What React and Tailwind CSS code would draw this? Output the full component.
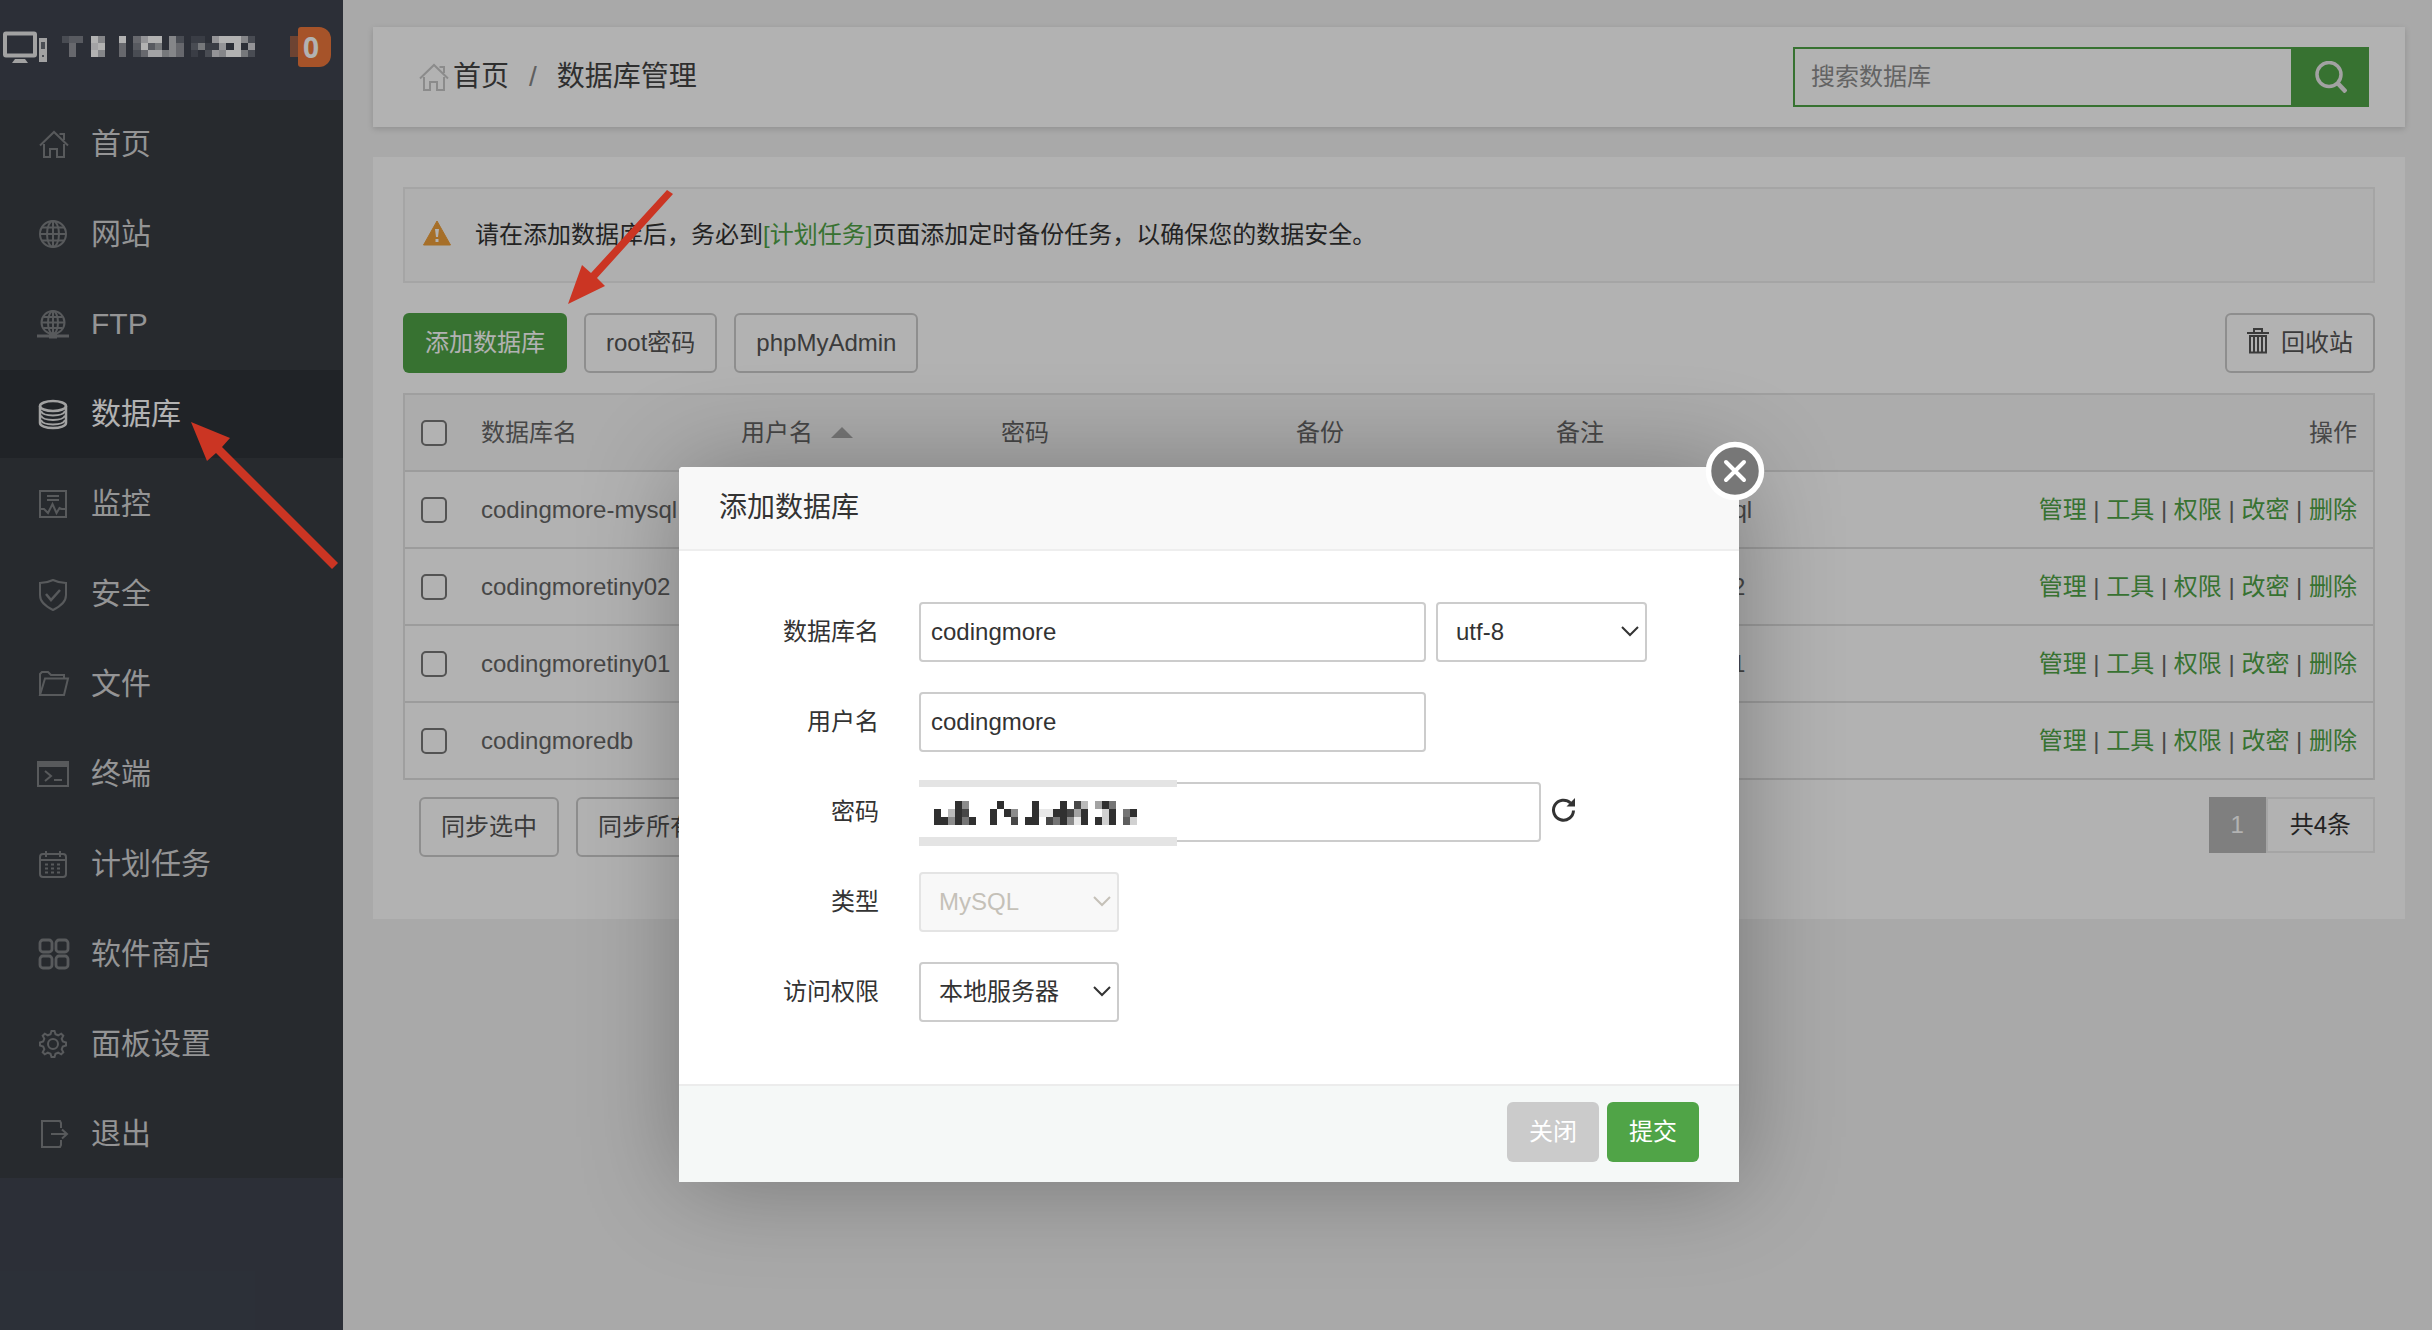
import React, { useState } from "react";

const menuItems = [
  { id: "home", label: "首页" },
  { id: "site", label: "网站" },
  { id: "ftp", label: "FTP" },
  { id: "database", label: "数据库" },
  { id: "monitor", label: "监控" },
  { id: "security", label: "安全" },
  { id: "files", label: "文件" },
  { id: "terminal", label: "终端" },
  { id: "cron", label: "计划任务" },
  { id: "store", label: "软件商店" },
  { id: "settings", label: "面板设置" },
  { id: "logout", label: "退出" },
];

const databases = ["codingmore-mysql", "codingmoretiny02", "codingmoretiny01", "codingmoredb"];
const rowActions = ["管理", "工具", "权限", "改密", "删除"];

// opacity of each masked cell, 0 - 9
const titleMask = [
  "233096009047990620110799962",
  "040089004039350640251170907",
  "040096004024885640102769952",
];
const passwordMask = [
  "00095000090000900090830496000",
  "90398000909500911998490029069",
  "99596900900809908695190929072",
];

const icons = {
  home: (
    <>
      <path d="M1 15.500 15 2l14 13.500" />
      <path d="M5 14v13h6v-8h7v8h7V14" />
      <path d="M20.500 4H25v6" />
    </>
  ),
  site: (
    <>
      <circle cx="14" cy="14" r="13" />
      <ellipse cx="14" cy="14" rx="6" ry="13" />
      <path d="M14 1v26M1 14h26M3 7.500h22M3 20.500h22" />
    </>
  ),
  ftp: (
    <>
      <circle cx="14" cy="12.500" r="11.500" />
      <ellipse cx="14" cy="12.500" rx="5" ry="11.500" />
      <path d="M14 1v23M3 12.500h22M4.500 7h19M4.500 18h19" />
      <path d="M-2 26h32" strokeWidth="3" />
      <path d="M10 26h8" strokeWidth="5" />
    </>
  ),
  database: (
    <g strokeWidth="2.500">
      <ellipse cx="14" cy="6" rx="13" ry="5" />
      <path d="M1 6v17c0 2.800 5.800 5 13 5s13-2.200 13-5V6" />
      <path d="M2 11c1 2.800 5.800 4.500 12 4.500s11-1.700 12-4.500M2 15.500c1 2.800 5.800 4.500 12 4.500s11-1.700 12-4.500M2 20c1 2.800 5.800 4.500 12 4.500s11-1.700 12-4.500" strokeWidth="2" />
    </g>
  ),
  monitor: (
    <>
      <path d="M1 1h26v26H1zM8 6h12M8 10h12" />
      <path d="M1 19h4l4 4 4.500-9 4 9 3-5 2 1H27" />
    </>
  ),
  security: (
    <>
      <path d="M14 0c4 2 8 3 13 3v12c0 7-5 11-13 15C6 26 1 22 1 15V3c5 0 9-1 13-3z" />
      <path d="m7 14 5 6L21 10" strokeWidth="2.500" />
    </>
  ),
  files: (
    <>
      <path d="M1 25V4l2-2h6l3 3h13v3" />
      <path d="M1 25 6 8.500h23L25 25H1z" />
    </>
  ),
  terminal: (
    <>
      <path d="M-1 2h30v24H-1z" />
      <path d="M0 4.500h28" strokeWidth="5" />
      <path d="m6 11 6 5-6 5M15 20h8" />
    </>
  ),
  cron: (
    <>
      <rect x="1" y="4" width="26" height="23" rx="3" />
      <path d="M1 10h26M7 1v6M21 1v6" />
      <path d="M6 14.500h17M6 18.500h17M6 22.500h17" strokeDasharray="3 3" />
    </>
  ),
  store: (
    <g strokeWidth="2.800">
      <rect x="1" y="0" width="12" height="12" rx="3" />
      <rect x="17" y="0" width="12" height="12" rx="3" />
      <rect x="1" y="16" width="12" height="12" rx="3" />
      <rect x="17" y="16" width="12" height="12" rx="3" />
    </g>
  ),
  settings: (
    <>
      <path d="M11.500 4.200 12.500 1h3l1 3.200 2.700 1.100 3-1.600 2.100 2.100-1.600 3 1.100 2.700 3.200 1v3l-3.200 1-1.100 2.700 1.600 3-2.100 2.100-3-1.600-2.700 1.100-1 3.200h-3l-1-3.200-2.700-1.100-3 1.600-2.100-2.100 1.600-3-1.100-2.700-3.200-1v-3l3.200-1 1.100-2.700-1.600-3 2.100-2.100 3 1.600z" />
      <circle cx="14" cy="14" r="5" />
    </>
  ),
  logout: (
    <>
      <path d="M22 8V3l-1-2H3v26h18l1-2v-5" />
      <path d="M12 14h15M23 9.500l5 4.500-5 4.500" />
    </>
  ),
};

function Icon({ name, className }) {
  return (
    <svg
      viewBox="0 0 28 28"
      className={`h-7 w-7 shrink-0 overflow-visible ${className}`}
      fill="none"
      stroke="currentColor"
      strokeWidth="2"
      aria-hidden="true"
    >
      {icons[name]}
    </svg>
  );
}

function Mask({ rows, className }) {
  return (
    <svg
      viewBox={`0 0 ${rows[0].length} ${rows.length}`}
      preserveAspectRatio="none"
      shapeRendering="crispEdges"
      fill="currentColor"
      className={className}
      aria-hidden="true"
    >
      {rows.map((row, y) =>
        row
          .split("")
          .map((level, x) =>
            level === "0" ? null : (
              <rect key={`${x}-${y}`} x={x} y={y} width="1" height="1" opacity={Number(level) / 9} />
            )
          )
      )}
    </svg>
  );
}

function Sidebar() {
  return (
    <aside className="w-[343px] shrink-0 bg-[#3f4450]">
      <div className="flex h-[100px] items-start pt-[27px]">
        <svg viewBox="0 0 46 40" className="mt-1 ml-[2px] h-10 w-[46px] text-[#e8e8e8]" fill="none" aria-hidden="true">
          <rect x="3" y="2.500" width="30" height="22" rx="1" stroke="currentColor" strokeWidth="4" />
          <path d="M13 28h10l3 4H10z" fill="currentColor" />
          <path d="M37 7h8v24h-8z" fill="currentColor" />
          <path d="M39 11h4v7h-4zM40 24h2v2h-2z" fill="#6b6f78" />
        </svg>
        <Mask rows={titleMask} className="mt-[9px] ml-[14px] h-[21px] w-[193px] text-white" />
        <span className="mt-[9px] ml-[35px] h-[21px] w-2 bg-[#9c6048]" />
        <span className="flex h-10 w-[33px] items-center rounded-l-[3px] rounded-r-[12px] bg-[#ee783c] pl-[5px] font-['Noto_Sans'] text-[28px] leading-10 font-bold text-white">
          0
        </span>
      </div>
      <nav className="flex flex-col gap-[2px] bg-[#393d43]">
        {menuItems.map((item) => {
          const active = item.id === "database";
          return (
            <a
              key={item.id}
              href="#"
              className={`flex h-[88px] items-center gap-6 pl-[39px] text-[30px] leading-10 ${
                active ? "bg-[#2f3339] text-white" : "text-[#d4d5d6]"
              }`}
            >
              <Icon name={item.id} className={active ? "text-[#e8e8e8]" : "text-[#7e8184]"} />
              {item.label}
            </a>
          );
        })}
      </nav>
    </aside>
  );
}

function Header() {
  return (
    <header className="flex h-[100px] items-center justify-between bg-white pr-9 pl-[46px] shadow-[0_2px_6px_rgba(0,0,0,0.15)]">
      <div className="flex items-center text-[28px] leading-10 text-[#444]">
        <Icon name="home" className="text-[#c8c8c8]" />
        <a href="#" className="ml-[6px]">首页</a>
        <span className="mx-5 text-[#888]">/</span>
        <span>数据库管理</span>
      </div>
      <form className="flex" onSubmit={(e) => e.preventDefault()}>
        <input
          type="text"
          aria-label="搜索数据库"
          placeholder="搜索数据库"
          className="h-[60px] w-[500px] border-2 border-[#50a447] bg-white px-4 text-[24px] placeholder:text-[#8f8f8f]"
        />
        <button type="submit" aria-label="搜索" className="flex h-[60px] w-[76px] items-center justify-center bg-[#50a447]">
          <svg viewBox="0 0 32 32" className="h-8 w-8" fill="none" stroke="#e8e8e8" strokeWidth="3.500" aria-hidden="true">
            <circle cx="14" cy="13.500" r="12" />
            <path d="m22.500 22 8.500 9" strokeWidth="4.500" />
          </svg>
        </button>
      </form>
    </header>
  );
}

function PlainButton({ children }) {
  return (
    <button className="flex h-[60px] items-center rounded-[6px] border-2 border-[#ccc] bg-white px-5 text-[24px] leading-8 text-[#555]">
      {children}
    </button>
  );
}

function Checkbox({ label }) {
  return (
    <input
      type="checkbox"
      aria-label={label}
      className="block h-[26px] w-[26px] appearance-none rounded-[5px] border-2 border-[#777] bg-white"
    />
  );
}

function DatabaseTable() {
  const cell = "h-[77px] border-b-2 border-[#e0e0e0] px-4 font-normal";

  return (
    <table className="mt-5 w-full table-fixed border-separate border-spacing-0 border-2 border-b-0 border-[#e4e4e4] text-left text-[24px] leading-8 text-[#666]">
      <colgroup>
        <col className="w-[60px]" />
        <col className="w-[260px]" />
        <col className="w-[260px]" />
        <col className="w-[295px]" />
        <col className="w-[260px]" />
        <col />
      </colgroup>
      <thead className="bg-[#f6f6f6]">
        <tr>
          <th className={cell}>
            <Checkbox label="全选" />
          </th>
          <th className={cell}>数据库名</th>
          <th className={cell}>
            <span className="flex items-center gap-[18px]">
              用户名
              <svg viewBox="0 0 22 11" className="h-[11px] w-[22px]" fill="#aaa" aria-hidden="true">
                <path d="M11 0 22 11H0z" />
              </svg>
            </span>
          </th>
          <th className={cell}>密码</th>
          <th className={cell}>备份</th>
          <th className={cell}>
            <span className="flex justify-between">
              <span>备注</span>
              <span>操作</span>
            </span>
          </th>
        </tr>
      </thead>
      <tbody>
        {databases.map((name) => (
          <tr key={name}>
            <td className={cell}>
              <Checkbox label={name} />
            </td>
            <td className={`${cell} whitespace-nowrap`}>{name}</td>
            <td className={cell}></td>
            <td className={cell}></td>
            <td className={cell}></td>
            <td className={cell}>
              <span className="flex justify-between">
                <span>{name}</span>
                <span>
                  {rowActions.map((action, i) => (
                    <React.Fragment key={action}>
                      {i > 0 && " | "}
                      <a href="#" className="text-[#50a447]">{action}</a>
                    </React.Fragment>
                  ))}
                </span>
              </span>
            </td>
          </tr>
        ))}
      </tbody>
    </table>
  );
}

const fieldClass = "h-[60px] rounded-[4px] border-2 border-[#ccc] bg-white text-[24px] text-[#333]";

function FormRow({ id, label, children }) {
  return (
    <div className="flex h-[60px] items-center">
      <label htmlFor={id} className="w-[200px] text-right leading-8">
        {label}
      </label>
      <div className="ml-10 flex items-center">{children}</div>
    </div>
  );
}

function Select({ id, label, value, disabled, className }) {
  return (
    <div className="relative">
      <select
        id={id}
        aria-label={label}
        disabled={disabled}
        className={`${fieldClass} appearance-none pl-[18px] disabled:border-[#e4e4e4] disabled:bg-[#f8f8f8] disabled:text-[#c5c1b8] disabled:opacity-100 ${className}`}
      >
        <option>{value}</option>
      </select>
      <svg
        viewBox="0 0 18 11"
        className={`pointer-events-none absolute top-6 right-2 h-[11px] w-[18px] ${
          disabled ? "text-[#c5c1b8]" : "text-[#333]"
        }`}
        fill="none"
        stroke="currentColor"
        strokeWidth="2"
        aria-hidden="true"
      >
        <path d="m1 1 8 8 8-8" />
      </svg>
    </div>
  );
}

function AddDatabaseModal() {
  const [name, setName] = useState("codingmore");
  const [user, setUser] = useState("codingmore");

  return (
    <div
      role="dialog"
      aria-label="添加数据库"
      className="relative w-[1060px] rounded-t-[4px] bg-white text-[24px] text-[#333] shadow-[2px_2px_100px_rgba(0,0,0,0.3)]"
    >
      <button aria-label="关闭窗口" className="absolute -top-[26px] -right-[26px] h-[60px] w-[60px]">
        <svg viewBox="0 0 60 60" className="h-full w-full" fill="none" aria-hidden="true">
          <circle cx="30" cy="30" r="26.500" fill="#777" stroke="#fff" strokeWidth="5.500" />
          <path d="m21 21 18 18M39 21 21 39" stroke="#fff" strokeWidth="4" strokeLinecap="round" />
        </svg>
      </button>
      <h2 className="flex h-[84px] items-center rounded-t-[4px] border-b-2 border-[#eee] bg-[#f8f8f8] px-10 text-[28px] leading-10">
        添加数据库
      </h2>
      <form onSubmit={(e) => e.preventDefault()}>
        <div className="flex flex-col gap-[30px] pt-[51px] pb-[62px]">
          <FormRow id="db-name" label="数据库名">
            <input
              id="db-name"
              type="text"
              value={name}
              onChange={(e) => setName(e.target.value)}
              className={`${fieldClass} w-[507px] px-[10px]`}
            />
            <div className="ml-[10px]">
              <Select label="编码" value="utf-8" className="w-[211px]" />
            </div>
          </FormRow>
          <FormRow id="db-user" label="用户名">
            <input
              id="db-user"
              type="text"
              value={user}
              onChange={(e) => setUser(e.target.value)}
              className={`${fieldClass} w-[507px] px-[10px]`}
            />
          </FormRow>
          <FormRow id="db-password" label="密码">
            <div className="relative">
              <input id="db-password" type="text" className={`${fieldClass} block w-[622px] px-[10px]`} />
              <div className="pointer-events-none absolute -top-[2px] left-0 h-[66px] w-[258px] border-t-[7px] border-b-[9px] border-[#e4e4e4] bg-white">
                <Mask rows={passwordMask} className="mt-[14px] ml-[15px] h-6 w-[203px] text-[#303030]" />
              </div>
            </div>
            <button type="button" aria-label="重新生成密码" className="mb-1 ml-[10px]">
              <svg viewBox="0 0 26 24" className="h-6 w-[26px]" fill="none" aria-hidden="true">
                <path d="M19.500 5A10 10 0 1 0 22.500 12.500" stroke="#333" strokeWidth="3" />
                <path d="M24 0v8.500h-8.500z" fill="#333" />
              </svg>
            </button>
          </FormRow>
          <FormRow id="db-type" label="类型">
            <Select id="db-type" value="MySQL" disabled className="w-[200px]" />
          </FormRow>
          <FormRow id="db-access" label="访问权限">
            <Select id="db-access" value="本地服务器" className="w-[200px]" />
          </FormRow>
        </div>
        <div className="flex justify-end gap-2 border-t-2 border-[#ececec] bg-[#f5f8f7] px-10 pt-4 pb-5 leading-8 text-white">
          <button type="button" className="h-[60px] w-[92px] rounded-[6px] bg-[#cbcbcb]">关闭</button>
          <button type="submit" className="h-[60px] w-[92px] rounded-[6px] bg-[#50a447]">提交</button>
        </div>
      </form>
    </div>
  );
}

// red pointers drawn above the page
function Arrows() {
  return (
    <svg className="pointer-events-none absolute top-0 left-0 h-[600px] w-[700px]" viewBox="0 0 700 600" fill="#cb3523" aria-hidden="true">
      <path d="M568 304 582 265 591 273 667 190 673 194 597 278 605 286z" />
      <path d="M191 422 230 438 222 447 338 563 332 569 216 453 207 461z" />
    </svg>
  );
}

export default function App() {
  return (
    <div className="relative min-h-screen font-['Liberation_Sans','Noto_Sans_CJK_SC',sans-serif]">
      <div className="flex min-h-screen bg-[#f2f2f2]">
        <Sidebar />
        <main className="min-w-0 flex-1 pt-[27px] pr-[27px] pl-[30px]">
          <Header />
          <section className="mt-[30px] bg-white px-[30px] pt-[30px] pb-[62px]">
            <div className="flex h-24 items-center gap-6 border-2 border-[#ededed] bg-[#fbfbfb] pl-[18px] text-[24px] leading-8 text-[#333]">
              <svg viewBox="0 0 28 26" className="mb-1 h-[26px] w-7" aria-hidden="true">
                <path d="M14 1 27.500 25H0.500z" fill="#ee9f3b" stroke="#ee9f3b" strokeLinejoin="round" />
                <path d="M12 9h4l-1 8h-2zM12.500 19h3v3h-3z" fill="#fff" />
              </svg>
              <p>
                请在添加数据库后，务必到
                <a href="#" className="text-[#50a447]">[计划任务]</a>
                页面添加定时备份任务，以确保您的数据安全。
              </p>
            </div>
            <div className="mt-[30px] flex items-center gap-[17px]">
              <button className="h-[60px] rounded-[6px] bg-[#50a447] px-[22px] text-[24px] leading-8 text-white">
                添加数据库
              </button>
              <PlainButton>root密码</PlainButton>
              <PlainButton>phpMyAdmin</PlainButton>
              <div className="ml-auto">
                <PlainButton>
                  <svg viewBox="0 0 22 26" className="mr-3 mb-1 h-[26px] w-[22px]" fill="none" stroke="#555" strokeWidth="2" aria-hidden="true">
                    <path d="M0 5h22M7 4V1h8v3M3 8h16v16.500H3zM7 8v16M11 8v16M15 8v16" />
                  </svg>
                  回收站
                </PlainButton>
              </div>
            </div>
            <DatabaseTable />
            <div className="mt-[17px] flex items-start gap-[17px] pl-4">
              <PlainButton>同步选中</PlainButton>
              <PlainButton>同步所有</PlainButton>
              <div className="ml-auto flex h-14 text-[24px] leading-[52px]">
                <span className="w-[57px] border-2 border-[#b6b6b6] bg-[#b6b6b6] text-center text-white">1</span>
                <span className="border-2 border-[#ececec] px-[22px] text-[#333]">共4条</span>
              </div>
            </div>
          </section>
        </main>
      </div>
      <div className="absolute inset-0 flex items-start justify-center bg-black/30 pt-[467px] pr-[14px]">
        <AddDatabaseModal />
      </div>
      <Arrows />
    </div>
  );
}
